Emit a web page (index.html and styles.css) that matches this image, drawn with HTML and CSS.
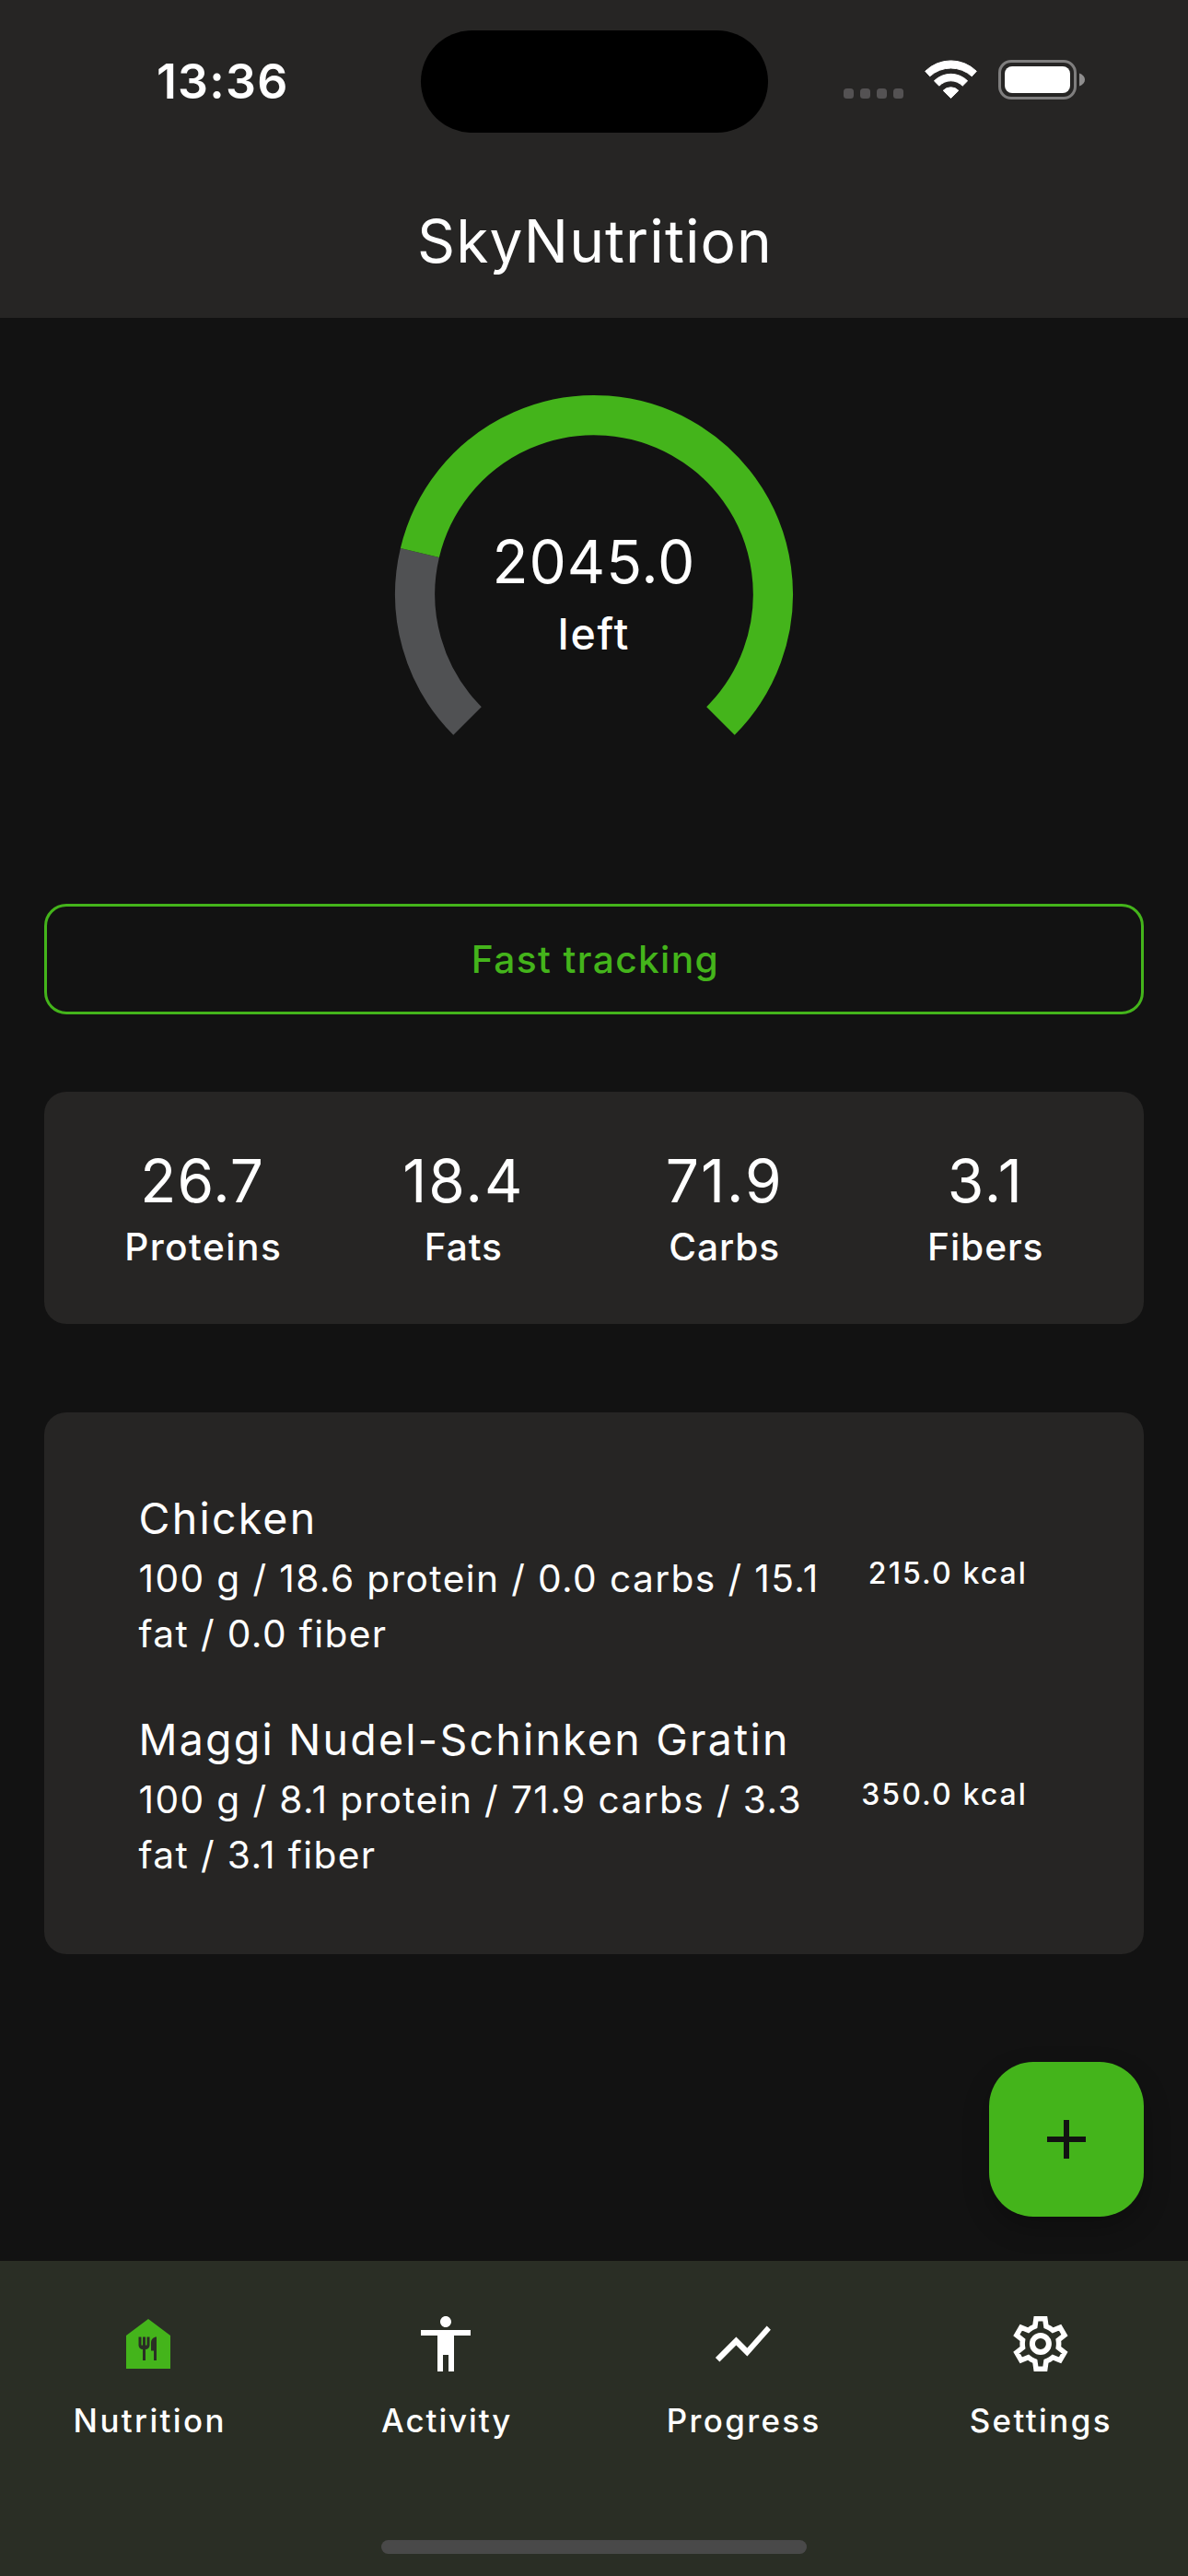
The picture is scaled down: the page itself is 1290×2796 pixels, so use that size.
FILE: index.html
```
<!DOCTYPE html>
<html lang="en">
<head>
<meta charset="utf-8">
<title>SkyNutrition</title>
<link rel="stylesheet" href="styles.css">
</head>
<body>
<div class="app">
  <header class="header">
    <div class="status">
      <div class="time">13:36</div>
      <div class="island"></div>
      <div class="status-icons">
        <div class="signal"><i></i><i></i><i></i><i></i></div>
        <svg class="wifi" width="57" height="42" viewBox="0 0 57 42">
          <g fill="#fff" stroke="#fff" stroke-width="1" stroke-linejoin="round">
            <path d="M.7 12.3A39.6 39.6 0 0 1 56.3 12.3L51.3 17.8A33.9 33.9 0 0 0 5.7 17.8z"/>
            <path d="M10.4 22.8A25.6 25.6 0 0 1 46.6 22.8L41.2 28.2A17.6 17.6 0 0 0 15.8 28.2z"/>
            <path d="M20.2 33.3A11.6 11.6 0 0 1 36.8 33.3L28.5 41.5z"/>
          </g>
        </svg>
        <svg class="battery" width="95" height="43" viewBox="0 0 95 43">
          <rect x="1.5" y="1.5" width="82" height="40" rx="12.5" fill="none" stroke="#7f7e7e" stroke-width="3"/>
          <rect x="7" y="7" width="71" height="29" rx="8" fill="#fff"/>
          <path d="M88 14.5C92 16 94 18.500 94 21.500S92 27 88 28.500z" fill="#8f8e8e"/>
        </svg>
      </div>
    </div>
    <h1 class="title">SkyNutrition</h1>
  </header>

  <main class="content">
    <section class="gauge">
      <svg class="gauge-ring" width="434" height="434" viewBox="-217 -217 434 434" fill="none" stroke-width="43.2">
        <path stroke="#505153" d="M-137.46 137.46A194.4 194.4 0 0 1 -189.11 -45.05"/>
        <path stroke="#44b41b" d="M-189.11 -45.05A194.4 194.4 0 1 1 137.46 137.46"/>
      </svg>
      <div class="gauge-label">
        <div class="gauge-value">2045.0</div>
        <div class="gauge-caption">left</div>
      </div>
    </section>

    <button class="fast">Fast tracking</button>

    <section class="card macros">
      <div class="macro"><div class="macro-value">26.7</div><div class="macro-name wide">Proteins</div></div>
      <div class="macro"><div class="macro-value spaced">18.4</div><div class="macro-name">Fats</div></div>
      <div class="macro"><div class="macro-value spaced">71.9</div><div class="macro-name">Carbs</div></div>
      <div class="macro"><div class="macro-value spaced">3.1</div><div class="macro-name">Fibers</div></div>
    </section>

    <section class="card meals">
      <article class="meal">
        <div class="meal-text">
          <h2 class="meal-name">Chicken</h2>
          <p class="meal-info">100 g / 18.6 protein / 0.0 carbs / 15.1 fat / 0.0 fiber</p>
        </div>
        <div class="kcal">215.0 kcal</div>
      </article>
      <article class="meal">
        <div class="meal-text">
          <h2 class="meal-name">Maggi Nudel-Schinken Gratin</h2>
          <p class="meal-info">100 g / 8.1 protein / 71.9 carbs / 3.3 fat / 3.1 fiber</p>
        </div>
        <div class="kcal">350.0 kcal</div>
      </article>
    </section>

    <button class="fab" aria-label="Add">
      <svg width="72" height="72" viewBox="0 0 24 24"><path fill="#121212" d="M19 13h-6v6h-2v-6H5v-2h6V5h2v6h6z"/></svg>
    </button>
  </main>

  <nav class="nav">
    <div class="tabs">
      <a class="tab active">
        <svg width="72" height="72" viewBox="0 0 24 24"><path d="M12 3 4 9v12h16V9l-8-6zm.5 9.500c0 .83-.67 1.500-1.500 1.500v4h-1v-4c-.83 0-1.500-.67-1.500-1.500v-3h1v3h.5v-3h1v3h.5v-3h1v3zM15 18h-1v-3.500h-1v-3c0-1.100.9-2 2-2V18z"/></svg>
        <span>Nutrition</span>
      </a>
      <a class="tab">
        <svg width="72" height="72" viewBox="0 0 24 24"><path d="M12 2c1.100 0 2 .9 2 2s-.9 2-2 2-2-.9-2-2 .9-2 2-2zm9 7h-6v13h-2v-6h-2v6H9V9H3V7h18v2z"/></svg>
        <span class="tight">Activity</span>
      </a>
      <a class="tab">
        <svg width="72" height="72" viewBox="-.3 0 24 24"><path d="M3.500 18.490l6-6.010 4 4L22 6.920l-1.410-1.410-7.090 7.970-4-4L2 16.990z"/></svg>
        <span>Progress</span>
      </a>
      <a class="tab">
        <svg width="72" height="72" viewBox="-.3 0 24 24">
          <defs>
            <path id="gear" d="M9.570 2h4.860l.44 3.070Q15.800 5.460 16.570 6.060l2.880-1.160 2.430 4.210-2.440 1.920Q19.570 12 19.440 12.970l2.440 1.920-2.430 4.210-2.880-1.160Q15.800 18.540 14.870 18.930L14.430 22H9.570l-.44-3.070Q8.200 18.540 7.430 17.940L4.550 19.100 2.120 14.890l2.440-1.920Q4.430 12 4.560 11.030L2.120 9.110 4.550 4.900l2.880 1.160Q8.200 5.460 9.130 5.070z"/>
            <clipPath id="gear-clip"><use href="#gear"/></clipPath>
          </defs>
          <use href="#gear" class="outline" stroke-width="3.700" clip-path="url(#gear-clip)"/>
          <circle class="outline" cx="12" cy="12" r="3" stroke-width="2"/>
        </svg>
        <span>Settings</span>
      </a>
    </div>
    <div class="home-bar"></div>
  </nav>
</div>
</body>
</html>
```
FILE: styles.css
```
* { box-sizing: border-box; margin: 0; padding: 0; }
body {
  background: #121212;
  color: #fff;
  font-family: Inter, "Liberation Sans", sans-serif;
}
svg { display: block; }
button { font: inherit; border: 0; background: none; }
.app { width: 1290px; height: 2796px; display: flex; flex-direction: column; }

.header { height: 345px; background: #262524; }
.status {
  height: 177px;
  display: grid;
  grid-template-columns: 1fr 377px 1fr;
  align-items: center;
}
.time { padding: 0 0 2px 170px; font-size: 51.8px; font-weight: 600; letter-spacing: 1.2px; }
.island { height: 111px; border-radius: 56px; background: #000; }
.status-icons {
  display: flex;
  align-items: flex-end;
  height: 43px;
  margin-bottom: 4px;
  padding-left: 82.5px;
}
.signal { display: flex; gap: 7px; margin: 0 23px 1px 0; }
.signal i { width: 11px; height: 11px; border-radius: 3.5px; background: #545253; }
.wifi { margin: 0 23px 1px 0; }
.title {
  height: 168px;
  padding: 1px 0 0 2px;
  line-height: 168px;
  text-align: center;
  font-size: 64px;
  font-weight: 400;
  letter-spacing: 1.1px;
}

.content {
  position: relative;
  flex: 1;
  padding: 0 48px;
  display: flex;
  flex-direction: column;
}
.gauge { height: 600px; margin-bottom: 36px; display: grid; place-items: center; }
.gauge-ring, .gauge-label { grid-area: 1 / 1; }
.gauge-label { text-align: center; padding-top: 2px; }
.gauge-value { font-size: 64px; line-height: 84px; letter-spacing: .97px; }
.gauge-caption { font-size: 46.5px; line-height: 72px; font-weight: 500; letter-spacing: 1.87px; }

.fast {
  height: 120px;
  margin-bottom: 84px;
  padding-left: 3px;
  border: 3px solid #44b41b;
  border-radius: 24px;
  color: #44b41b;
  font-size: 40.7px;
  font-weight: 500;
  letter-spacing: 1.38px;
}

.card { background: #262524; border-radius: 24px; }
.macros {
  height: 252px;
  margin-bottom: 96px;
  padding: 1px 30px 0 30px;
  display: grid;
  grid-template-columns: repeat(4, 1fr);
  align-items: center;
  text-align: center;
}
.macro-value { font-size: 64px; line-height: 84px; letter-spacing: 1.14px; }
.macro-value.spaced { letter-spacing: 2px; }
.macro-name { font-size: 40.7px; line-height: 60px; font-weight: 500; letter-spacing: .9px; }
.macro-name.wide { padding-left: 2px; letter-spacing: 1.45px; }

.meals {
  height: 588px;
  padding: 79px 126px 0 102.5px;
  display: flex;
  flex-direction: column;
  gap: 48px;
}
.meal { display: flex; align-items: center; justify-content: space-between; }
.meal-text { width: 750px; }
.meal-name { font-size: 46.5px; line-height: 72px; font-weight: 400; letter-spacing: 2.22px; }
.meal-info { font-size: 40.7px; line-height: 60px; letter-spacing: 1.37px; }
.kcal { padding-bottom: 1px; font-size: 32px; font-weight: 500; letter-spacing: 2.1px; white-space: nowrap; }

.fab {
  position: absolute;
  right: 48px;
  bottom: 48px;
  width: 168px;
  height: 168px;
  display: grid;
  place-items: center;
  border-radius: 48px;
  background: #44b41b;
  box-shadow: 0 12px 28px rgba(0, 0, 0, .25);
}

.nav {
  height: 342px;
  padding: 54px 0 24px;
  background: #2a2e25;
  display: flex;
  flex-direction: column;
  justify-content: space-between;
  align-items: center;
}
.tabs { width: 100%; display: grid; grid-template-columns: repeat(4, 1fr); }
.tab { display: flex; flex-direction: column; align-items: center; gap: 23px; fill: #fff; }
.tab.active { fill: #44b41b; }
.tab span {
  padding-left: 3px;
  font-size: 34.9px;
  line-height: 48px;
  font-weight: 500;
  letter-spacing: 2.4px;
}
.tab span.tight { letter-spacing: 1.94px; }
.outline { fill: none; stroke: #fff; }
.home-bar { width: 462px; height: 15px; border-radius: 8px; background: #494949; }
```
